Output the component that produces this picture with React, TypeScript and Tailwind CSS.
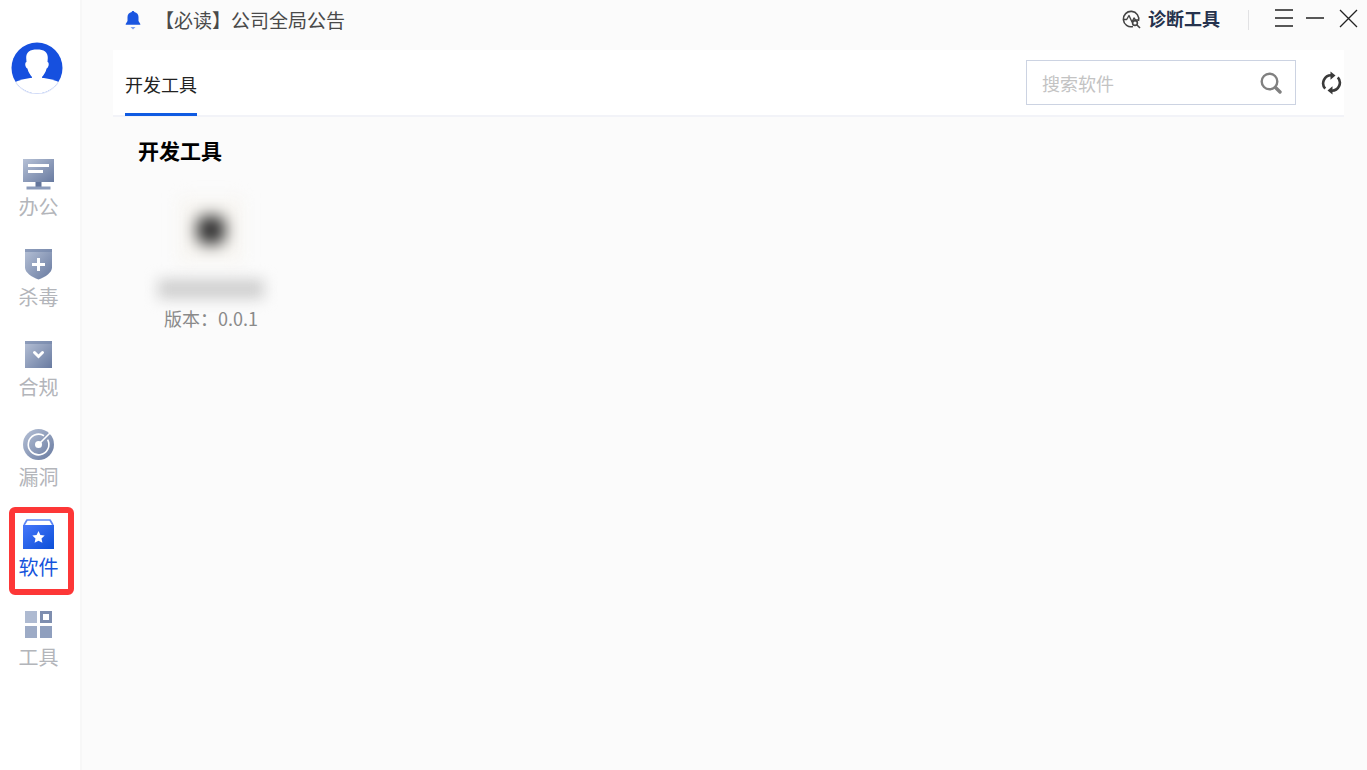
import type { ReactNode } from "react";

type NavItem = { id: string; label: string; icon: ReactNode };

// Every sidebar icon is drawn in a 33x33 box and filled with the shared #steel gradient.
const NAV: NavItem[] = [
  {
    id: "office",
    label: "办公",
    icon: (
      <>
        <path d="M1 1h31v23H1z" fill="url(#steel)" />
        <path d="M13.500 24h6v5h-6z" fill="#63759b" />
        <path d="M4.500 28.500h24v3h-24z" fill="#8b9bba" />
        <path d="M6 6h21v3H6zM6 12h15v3H6z" fill="#fff" />
      </>
    ),
  },
  {
    id: "antivirus",
    label: "杀毒",
    icon: (
      <>
        <path d="M3 1h27v18.500c0 5-6.500 9.500-13.500 12C9.500 29 3 24.500 3 19.500z" fill="url(#steel)" />
        <path d="M3 1h27v3H3z" fill="#7183a8" opacity=".6" />
        <path d="M15 10h3v5h5v3h-5v5h-3v-5h-5v-3h5z" fill="#fff" />
      </>
    ),
  },
  {
    id: "compliance",
    label: "合规",
    icon: (
      <>
        <path d="M3 3h27v27H3z" fill="url(#steel)" />
        <path d="M3 3h27v3H3z" fill="#7183a8" opacity=".6" />
        <path d="M12.500 14.500l4 4 4-4" fill="none" stroke="#fff" strokeWidth="3" strokeLinecap="round" />
      </>
    ),
  },
  {
    id: "leak",
    label: "漏洞",
    icon: (
      <>
        <circle cx="16.500" cy="16.500" r="15.500" fill="url(#steel)" />
        <path
          d="M22 7.800A10.300 10.300 0 1 0 25.600 11.600M16.500 16.500L29 4"
          fill="none"
          stroke="#fff"
          strokeWidth="1.600"
        />
        <circle cx="16.500" cy="16.500" r="3.500" fill="#fff" />
      </>
    ),
  },
  {
    id: "software",
    label: "软件",
    icon: (
      <>
        <path d="M2 7l3-5h23l3 5" fill="#fff" stroke="#5c86f3" strokeWidth="1.700" strokeLinejoin="round" />
        <path d="M1 7h31v24H1z" fill="url(#azure)" />
        <path
          d="M16.500 13l1.900 4 4.300.5-3.200 3 .9 4.300-3.900-2.100-3.900 2.100.9-4.300-3.200-3 4.300-.5z"
          fill="#fff"
        />
      </>
    ),
  },
  {
    id: "tools",
    label: "工具",
    icon: (
      <>
        <path d="M3 3h12v12H3z" fill="#aebad1" />
        <path d="M3 18h12v12H3z" fill="#9dabc6" />
        <path d="M18 18h12v12H18z" fill="#8f9fbe" />
        <path d="M18 3h12v12H18z" fill="#7e8eaf" />
        <path d="M21 6h6v6h-6z" fill="#fff" />
      </>
    ),
  },
];

const ACTIVE = "software";

function Gradients() {
  return (
    <svg width="0" height="0" className="absolute" aria-hidden>
      <defs>
        <linearGradient id="steel" x1="0" y1="0" x2="1" y2="1">
          <stop offset="0" stopColor="#b6c1d6" />
          <stop offset="1" stopColor="#687aa0" />
        </linearGradient>
        <linearGradient id="azure" x1="0" y1="0" x2="1" y2="1">
          <stop offset="0" stopColor="#4677fa" />
          <stop offset="1" stopColor="#0b4fd8" />
        </linearGradient>
        <clipPath id="avatar">
          <circle cx="26" cy="26" r="25.500" />
        </clipPath>
      </defs>
    </svg>
  );
}

function Sidebar() {
  return (
    <aside className="w-[82px] shrink-0 border-r-2 border-[#f7f7f7] bg-white pt-[42px]">
      <button type="button" aria-label="用户" className="ml-[11px] block">
        <svg width="52" height="52" viewBox="0 0 52 52">
          <circle cx="26" cy="26" r="25.500" fill="#1650df" />
          <g clipPath="url(#avatar)" fill="#fff">
            <path d="M0 42Q12 35.500 26 35.500T52 42V52H0z" />
            <path d="M26 7.500C33 7.500 37 10 36.800 16l-.3 4c2 .3 1.500 5.500-.9 6.500-1 4-2.600 6-4.600 8.500V38H21v-3c-2-2.500-3.600-4.500-4.600-8.500-2.400-1-2.900-6.200-.9-6.500l-.3-4C15 10 19 7.500 26 7.500z" />
          </g>
          <path d="M5 41a25.500 25.500 0 0 0 42 0" fill="none" stroke="#dfe5f8" />
        </svg>
      </button>
      <nav className="mt-16 flex flex-col">
        {NAV.map((item) => {
          const active = item.id === ACTIVE;
          return (
            <button
              key={item.id}
              type="button"
              aria-current={active ? "page" : undefined}
              className={`relative flex h-[90px] w-full flex-col items-center pr-[3px] text-[20px] leading-7 ${
                active ? "text-[#1554dc]" : "text-[#b3b5ba]"
              }`}
            >
              <svg width="33" height="33" viewBox="0 0 33 33" aria-hidden>
                {item.icon}
              </svg>
              <span className="mt-[2px]">{item.label}</span>
              {active && (
                <span className="absolute -top-[11px] left-[9px] h-[88px] w-[65px] rounded-md border-[6px] border-[#fd3737]" />
              )}
            </button>
          );
        })}
      </nav>
    </aside>
  );
}

function TitleBar() {
  return (
    <header className="flex h-[50px] items-start justify-between pl-[43px] text-[#333]">
      <a href="#notice" className="flex h-10 items-center text-[19px] text-[#4a4a4a]">
        <svg width="16" height="20" viewBox="0 0 16 20" className="mr-[14px]" aria-hidden>
          <path
            d="M8 1c.8 0 1.300.5 1.300 1C12 2.600 13.500 4.500 13.500 7v4l1.800 3v.7H.7V14l1.800-3V7c0-2.500 1.500-4.400 4.200-5 0-.5.500-1 1.300-1z"
            fill="#1a55e0"
          />
          <path d="M5.500 17h5L8 19.500z" fill="#7fa1f0" />
        </svg>
        【必读】公司全局公告
      </a>
      <div className="flex h-9 items-center pr-[9px]">
        <button type="button" className="flex items-center gap-[7px] text-[18px] font-bold text-[#25324d]">
          <svg
            width="19"
            height="19"
            viewBox="0 0 19 19"
            fill="none"
            stroke="#444"
            strokeWidth="1.600"
            className="mt-[2px]"
            aria-hidden
          >
            <path d="M11 16.500A7.700 7.700 0 1 1 16.500 11" />
            <path d="M1.500 9.500h3.200L7 5.500l3 6.500 2-4 1.500 2H17" strokeWidth="1.400" strokeLinejoin="round" />
            <circle cx="13" cy="13" r="2.400" fill="#fbfbfb" />
            <path d="M15 15l3 3" />
          </svg>
          诊断工具
        </button>
        <span className="mt-1 mr-[25px] ml-[28px] h-5 w-px bg-[#e2e2e4]" />
        <div className="flex items-center gap-3">
          <button type="button" aria-label="菜单">
            <svg width="20" height="20" viewBox="0 0 20 20" stroke="#222" strokeWidth="1.500">
              <path d="M1 2h18M1 10h18M1 18h18" />
            </svg>
          </button>
          <button type="button" aria-label="最小化">
            <svg width="20" height="20" viewBox="0 0 20 20" stroke="#222" strokeWidth="1.500">
              <path d="M0 10h18" />
            </svg>
          </button>
          <button type="button" aria-label="关闭">
            <svg width="20" height="20" viewBox="0 0 20 20" stroke="#222" strokeWidth="1.300">
              <path d="M2 2l17 17M19 2L2 19" />
            </svg>
          </button>
        </div>
      </div>
    </header>
  );
}

function Toolbar() {
  return (
    <div className="mr-[23px] ml-[31px] flex h-[67px] justify-between border-b-2 border-[#f2f3f8] bg-white pl-3">
      <button
        type="button"
        className="-mb-px border-b-3 border-[#0f5be2] pt-[6px] text-[18px] text-[#222]"
      >
        开发工具
      </button>
      <div className="flex items-center">
        <div className="flex h-[45px] w-[270px] items-center border border-[#ccd3e2] pr-[13px] pl-[15px]">
          <input
            type="text"
            aria-label="搜索软件"
            placeholder="搜索软件"
            className="min-w-0 flex-1 pt-[2px] text-[18px] text-[#333] outline-none placeholder:text-[#c3c3c3]"
          />
          <button type="button" aria-label="搜索">
            <svg width="22" height="22" viewBox="0 0 22 22" fill="none" stroke="#808080" strokeWidth="2.400">
              <circle cx="9.500" cy="9.500" r="7.800" />
              <path d="M15.500 15.500l4.500 4.500" strokeWidth="3.400" strokeLinecap="round" />
            </svg>
          </button>
        </div>
        <button type="button" aria-label="刷新" className="mr-[2px] ml-[25px]">
          <svg width="21" height="24" viewBox="0 0 21 24" fill="none" stroke="#3a3a3a" strokeWidth="2.600">
            <path d="M4.200 17.600A8 8 0 0 1 10.500 4.300M16.800 6.400A8 8 0 0 1 10.500 19.700" />
            <path d="M9.500 .5l5 4-5 4.200zM11.500 15.300l-5 4.200 5 4z" fill="#3a3a3a" stroke="none" />
          </svg>
        </button>
      </div>
    </div>
  );
}

// The app's icon and name stay blurred out, only the version is readable.
function SoftwareCard({ version }: { version: string }) {
  return (
    <li className="flex w-[146px] flex-col items-center">
      <div className="flex size-[64px] items-center justify-center bg-[#f8f6f2] blur-[8px]">
        <span className="size-7 rounded-lg bg-[#2c2c2c]" />
      </div>
      <div className="mt-[17px] h-5 w-[106px] bg-[#d0d0d0] blur-[7px]" />
      <p className="mt-[7px] text-[18px] leading-6 text-[#8a8a8a]">版本：{version}</p>
    </li>
  );
}

export default function App() {
  return (
    <div className="flex min-h-screen bg-[#fbfbfb] font-['Noto_Sans_CJK_SC',sans-serif]">
      <Gradients />
      <Sidebar />
      <main className="min-w-0 flex-1">
        <TitleBar />
        <Toolbar />
        <section className="pt-[18px] pl-14">
          <h2 className="text-[21px] leading-[30px] font-bold text-black">开发工具</h2>
          <ul className="mt-[33px] flex flex-wrap">
            <SoftwareCard version="0.0.1" />
          </ul>
        </section>
      </main>
    </div>
  );
}
